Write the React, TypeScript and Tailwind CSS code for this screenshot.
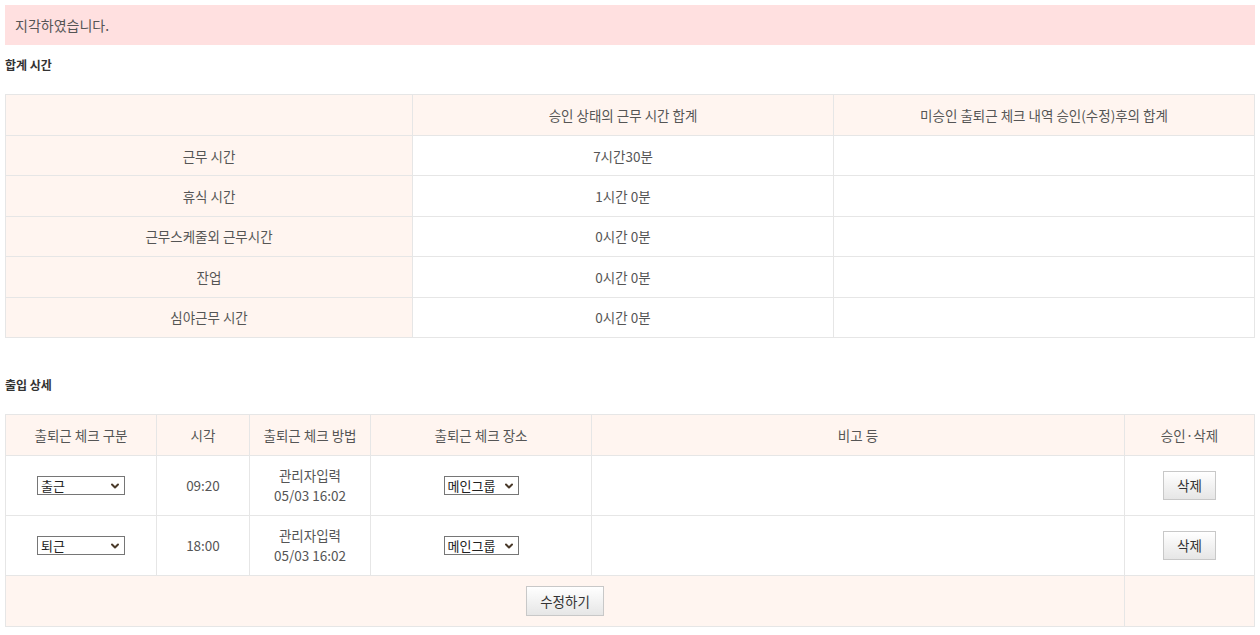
import { ChevronDown } from "lucide-react";

const font = "font-['Noto_Sans_CJK_KR','Noto_Sans',sans-serif]";

const totals = [
  { label: "근무 시간", value: "7시간30분" },
  { label: "휴식 시간", value: "1시간 0분" },
  { label: "근무스케줄외 근무시간", value: "0시간 0분" },
  { label: "잔업", value: "0시간 0분" },
  { label: "심야근무 시간", value: "0시간 0분" },
];

const records = [
  { type: "출근", time: "09:20" },
  { type: "퇴근", time: "18:00" },
];

function FakeSelect({ value, width }: { value: string; width: string }) {
  return (
    <div
      className={`inline-flex h-[19px] items-center justify-between border border-[#767676] bg-white pl-[3px] pr-[3px] text-left text-[13px] text-[#222] ${width}`}
    >
      <span className="leading-none">{value}</span>
      <ChevronDown size={12} strokeWidth={4} className="text-[#4a3a2a]" />
    </div>
  );
}

function GrayButton({ label, className }: { label: string; className: string }) {
  return (
    <button
      className={`border border-[#c8c8c8] bg-gradient-to-b from-white to-[#e6e6e6] text-[13.5px] text-[#333] ${className}`}
    >
      {label}
    </button>
  );
}

export default function App() {
  const th = "border border-[#e6e6e6] bg-[#fff5f0] font-normal text-[13.5px] text-[#555]";
  const td = "border border-[#e6e6e6] text-[13.5px] text-[#555] text-center";

  return (
    <div className={`${font} bg-white px-[5px] pt-[5px] pb-[8px]`}>
      <div className="flex h-[40px] items-center bg-[#ffe0e0] px-[10px] text-[14px] text-[#555]">
        지각하였습니다.
      </div>

      <h3 className="mt-[12px] text-[12px] font-semibold leading-[16px] text-[#333]">합계 시간</h3>

      <table className="mt-[21px] w-full border-collapse">
        <thead>
          <tr className="h-[41px]">
            <th className={`${th} w-[407px]`}></th>
            <th className={`${th} w-[421px]`}>승인 상태의 근무 시간 합계</th>
            <th className={th}>미승인 출퇴근 체크 내역 승인(수정)후의 합계</th>
          </tr>
        </thead>
        <tbody>
          {totals.map((row) => (
            <tr key={row.label} className="h-[40.4px]">
              <td className={`${td} bg-[#fff5f0]`}>{row.label}</td>
              <td className={td}>{row.value}</td>
              <td className={td}></td>
            </tr>
          ))}
        </tbody>
      </table>

      <h3 className="mt-[39px] text-[12px] font-semibold leading-[16px] text-[#333]">출입 상세</h3>

      <table className="mt-[21px] w-full border-collapse">
        <thead>
          <tr className="h-[41px]">
            <th className={`${th} w-[151px]`}>출퇴근 체크 구분</th>
            <th className={`${th} w-[93px]`}>시각</th>
            <th className={`${th} w-[121px]`}>출퇴근 체크 방법</th>
            <th className={`${th} w-[221px]`}>출퇴근 체크 장소</th>
            <th className={th}>비고 등</th>
            <th className={`${th} w-[130px]`}>승인·삭제</th>
          </tr>
        </thead>
        <tbody>
          {records.map((r) => (
            <tr key={r.type} className="h-[60px]">
              <td className={td}>
                <FakeSelect value={r.type} width="w-[88px]" />
              </td>
              <td className={td}>{r.time}</td>
              <td className={`${td} leading-[20px]`}>
                관리자입력
                <br />
                05/03 16:02
              </td>
              <td className={td}>
                <FakeSelect value="메인그룹" width="w-[75px]" />
              </td>
              <td className={td}></td>
              <td className={td}>
                <GrayButton label="삭제" className="h-[29px] w-[53px]" />
              </td>
            </tr>
          ))}
          <tr className="h-[51px]">
            <td colSpan={5} className={`${td} bg-[#fff5f0]`}>
              <GrayButton label="수정하기" className="h-[30px] w-[78px]" />
            </td>
            <td className={`${td} bg-[#fff5f0]`}></td>
          </tr>
        </tbody>
      </table>
    </div>
  );
}
